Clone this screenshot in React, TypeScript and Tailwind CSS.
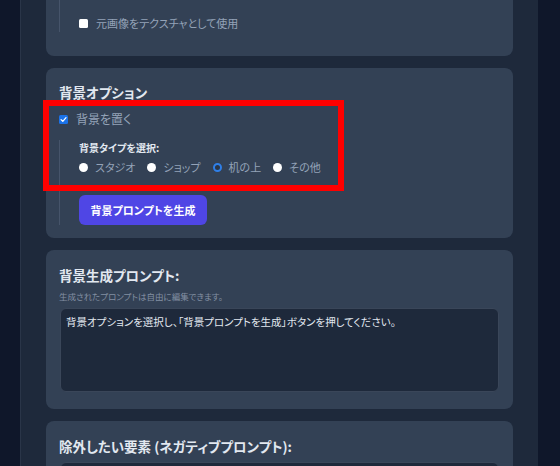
import React from "react";

function Check({ checked }: { checked: boolean }) {
  if (checked) {
    return (
      <span className="flex h-[9px] w-[9px] shrink-0 items-center justify-center rounded-[1.5px] bg-[#1b72e8]">
        <svg width="7" height="7" viewBox="0 0 10 10">
          <path d="M1.5 5.2 L4 7.6 L8.6 2.4" fill="none" stroke="#ffffff" strokeWidth="1.8" strokeLinecap="round" strokeLinejoin="round" />
        </svg>
      </span>
    );
  }
  return <span className="h-[9px] w-[9px] shrink-0 rounded-[1.5px] bg-white" />;
}

function Radio({ label, checked }: { label: string; checked?: boolean }) {
  return (
    <div className="flex items-center gap-[7px]">
      {checked ? (
        <span className="h-[9px] w-[9px] shrink-0 rounded-full border-[2.5px] border-[#2f7fe8] bg-[#2a3648]" />
      ) : (
        <span className="h-[9px] w-[9px] shrink-0 rounded-full bg-white" />
      )}
      <span className="text-[11px] leading-[18px] text-[#94a3b8]">{label}</span>
    </div>
  );
}

export default function App() {
  return (
    <div className="relative h-[466px] w-[560px] overflow-hidden bg-[#0f172a] font-['Noto_Sans_CJK_JP',sans-serif] [font-feature-settings:'palt']">
      <div className="ml-[20px] mt-[-30px] flex w-[518px] flex-col gap-[12px] border-l border-[#2a3548] bg-[#1e293b] pb-[40px] pl-[25px] pr-[25px]">
        {/* Card 1 (partially visible) */}
        <div className="rounded-lg bg-[#334155] pb-[24px] pl-[13px] pr-[14px]">
          <div className="border-l border-[#46546a] pl-[19px] pt-[44px]">
            <div className="flex h-[18px] items-center gap-[8px]">
              <Check checked={false} />
              <span className="text-[11px] leading-[18px] text-[#94a3b8]">元画像をテクスチャとして使用</span>
            </div>
          </div>
        </div>

        {/* Card 2 */}
        <div className="rounded-lg bg-[#334155] pb-[13px] pl-[13px] pr-[14px] pt-[14px]">
          <h3 className="text-[13.5px] font-bold leading-[20px] text-[#e2e8f0]">背景オプション</h3>
          <div className="mt-[8px] flex h-[18px] items-center gap-[8px]">
            <Check checked={true} />
            <span className="text-[12px] leading-[18px] text-[#94a3b8]">背景を置く</span>
          </div>
          <div className="mt-[12px] border-l border-[#46546a] pl-[19px]">
            <div className="text-[10px] font-bold leading-[16px] text-[#e2e8f0]">背景タイプを選択:</div>
            <div className="mt-[2px] flex h-[18px] items-center gap-[12px]">
              <Radio label="スタジオ" />
              <Radio label="ショップ" />
              <Radio label="机の上" checked />
              <Radio label="その他" />
            </div>
            <button className="mt-[19px] flex h-[30px] w-[128px] items-center justify-center rounded-md bg-[#4f46e5] text-[11px] font-bold text-white">
              背景プロンプトを生成
            </button>
          </div>
        </div>

        {/* Card 3 */}
        <div className="rounded-lg bg-[#334155] pb-[17px] pl-[13px] pr-[14px] pt-[15px]">
          <h3 className="text-[13.5px] font-bold leading-[20px] text-[#e2e8f0]">背景生成プロンプト:</h3>
          <p className="mt-[5px] text-[8.5px] leading-[12px] text-[#8390a3]">生成されたプロンプトは自由に編集できます。</p>
          <textarea
            className="ml-[1px] mt-[6px] block h-[84px] w-[439px] resize-none rounded-md border border-[#3a4659] bg-[#1e293b] px-[5px] py-[5px] text-[10.5px] leading-[16px] text-[#e2e8f0] outline-none"
            defaultValue="背景オプションを選択し、「背景プロンプトを生成」ボタンを押してください。"
          />
        </div>

        {/* Card 4 */}
        <div className="rounded-lg bg-[#334155] pb-[17px] pl-[13px] pr-[14px] pt-[15px]">
          <h3 className="text-[13.5px] font-bold leading-[20px] text-[#e2e8f0]">除外したい要素 (ネガティブプロンプト):</h3>
          <textarea
            className="ml-[1px] mt-[6px] block h-[84px] w-[439px] resize-none rounded-md border border-[#3a4659] bg-[#1e293b] px-[5px] py-[5px] text-[10.5px] leading-[16px] text-[#e2e8f0] outline-none"
            defaultValue=""
          />
        </div>
      </div>

      {/* red annotation rectangle */}
      <div className="pointer-events-none absolute left-[43px] top-[100px] h-[91px] w-[301px] border-[6px] border-[#ff0000]" />
    </div>
  );
}
